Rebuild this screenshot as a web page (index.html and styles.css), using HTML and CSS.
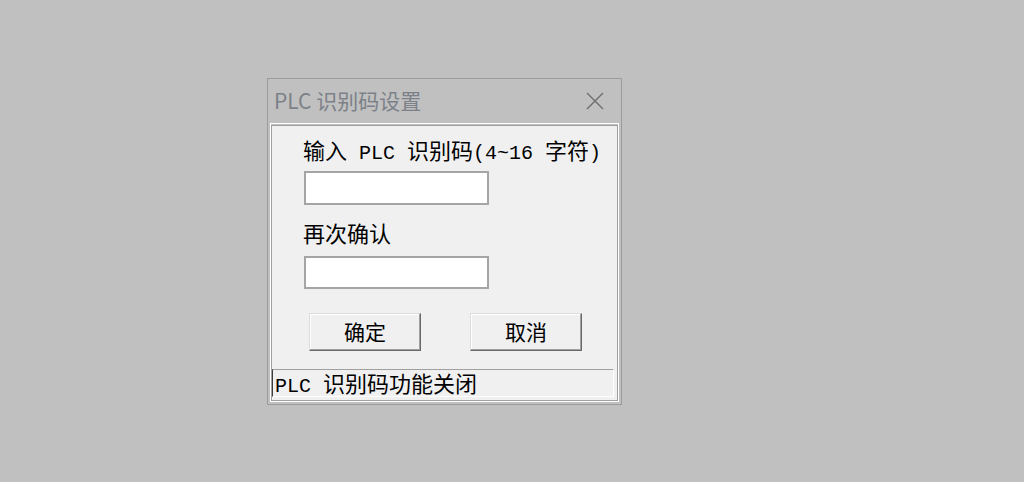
FILE: index.html
```html
<!DOCTYPE html>
<html lang="zh-CN">
<head>
<meta charset="utf-8">
<title>PLC 识别码设置</title>
<link rel="stylesheet" href="styles.css">
</head>
<body>
<div class="window">
  <div class="titlebar">
    <span class="title">PLC 识别码设置</span>
    <svg class="close" width="18" height="18" viewBox="0 0 18 18" aria-hidden="true">
      <path d="M1 1 L17 17 M17 1 L1 17" stroke="#6e6e6e" stroke-width="1.4" fill="none"/>
    </svg>
  </div>
  <div class="frame">
    <div class="client">
      <div class="form">
        <div class="label">输入<span class="lat"> PLC </span>识别码<span class="lat">(4~16 </span>字符<span class="lat">)</span></div>
        <input class="field field-first" type="text">
        <div class="label label-second">再次确认</div>
        <input class="field field-second" type="text">
      </div>
      <div class="buttons">
        <button class="btn" type="button">确定</button>
        <button class="btn" type="button">取消</button>
      </div>
      <div class="status"><span class="lat">PLC </span>识别码功能关闭</div>
    </div>
  </div>
</div>
</body>
</html>
```
FILE: styles.css
```css
html, body {
  margin: 0;
  background: #c0c0c0;
}
body {
  padding: 78px 0 0 267px;
  height: 482px;
  box-sizing: border-box;
  font-family: "Noto Sans CJK SC", sans-serif;
}
.window {
  width: 355px;
  box-sizing: border-box;
  border: 1px solid #9c9c9c;
  background: #c0c0c0;
}
.titlebar {
  height: 44px;
  display: flex;
  align-items: center;
  justify-content: space-between;
  padding: 0 17px 0 6px;
}
.title {
  font-family: "Noto Sans CJK SC", sans-serif;
  font-size: 21px;
  line-height: 24px;
  color: #7c8189;
  margin-top: -2px;
}
.close {
  display: block;
}
.frame {
  margin: 0 2px 2px 2px;
  border: 1px solid #fff;
  padding-top: 1px;
}
.client {
  border: 1px solid #a0a0a0;
  background: #f0f0f0;
  padding: 12px 0 3px 0;
}
.form {
  padding-left: 31px;
}
.label {
  font-family: "Noto Sans CJK SC", sans-serif;
  font-size: 22px;
  line-height: 22px;
  height: 22px;
  color: #000;
  white-space: nowrap;
}
.lat {
  font-family: "Liberation Mono", monospace;
  font-size: 20px;
}
.label-second {
  margin-top: 16px;
}
.field {
  display: block;
  margin: 11px 0 0 1px;
  width: 185px;
  height: 34px;
  box-sizing: border-box;
  border: 2px solid #a5a5a5;
  background: #fff;
  padding: 0;
  outline: none;
}
.field-second {
  margin-top: 13px;
  height: 33px;
}
.buttons {
  display: flex;
  gap: 49px;
  padding-left: 37px;
  margin-top: 24px;
}
.btn {
  width: 112px;
  height: 38px;
  box-sizing: border-box;
  background: #f0f0f0;
  border: 1px solid;
  border-color: #dcdcdc #696969 #696969 #dcdcdc;
  box-shadow: inset -1px -1px 0 #a0a0a0, inset 1px 1px 0 #fff;
  font-family: "Noto Sans CJK SC", sans-serif;
  font-size: 21px;
  line-height: 22px;
  color: #000;
  padding: 0 0 2px 0;
}
.status {
  margin: 18px 3px 0 0;
  height: 28px;
  box-sizing: border-box;
  border-style: solid;
  border-width: 1px;
  border-color: #a0a0a0 #fff #fff #3c3c3c;
  padding-left: 2px;
  font-family: "Noto Sans CJK SC", sans-serif;
  font-size: 22px;
  line-height: 25px;
  color: #000;
  white-space: nowrap;
}
```
